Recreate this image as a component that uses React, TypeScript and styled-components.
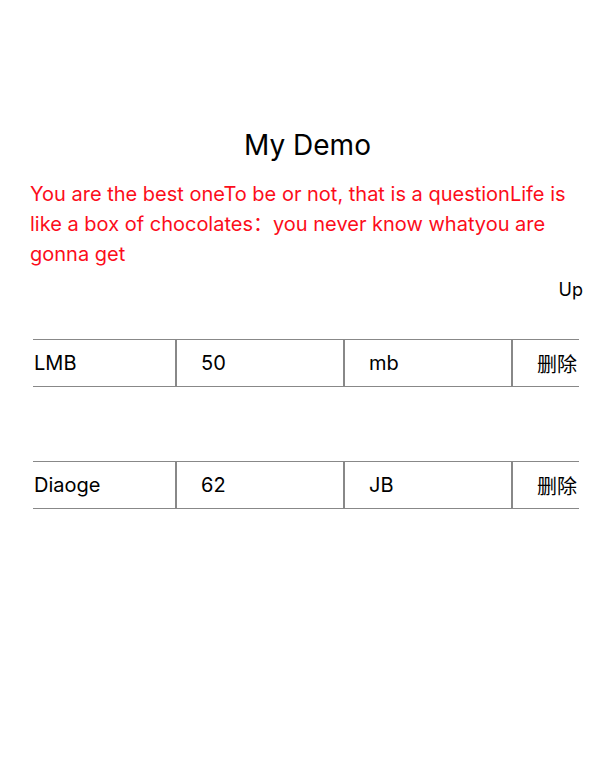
import React from "react";
import styled, { createGlobalStyle } from "styled-components";

const Global = createGlobalStyle`
  html, body { margin: 0; padding: 0; background: #fff; }
  body { font-family: Inter, "Liberation Sans", "Noto Sans CJK SC", sans-serif; color: #000; }
`;

const Page = styled.div`
  display: flex;
  flex-direction: column;
  padding: 128px 25px 0 30px;
`;

const Title = styled.h1`
  margin: 0;
  font-size: 28px;
  font-weight: 400;
  line-height: 34px;
  text-align: center;
  padding-left: 2px;
`;

const Quote = styled.p`
  margin: 17px 0 0;
  font-size: 20px;
  line-height: 30px;
  color: #fc0d1b;
`;

const UpButton = styled.div`
  margin-top: 9px;
  align-self: flex-end;
  font-size: 18px;
  line-height: 24px;
`;

const Rows = styled.div`
  display: flex;
  flex-direction: column;
  gap: 74px;
  margin: 37px 4px 0 3px;
`;

const Row = styled.div`
  display: flex;
  height: 46px;
  border-top: 1px solid #888;
  border-bottom: 1px solid #888;
`;

const Cell = styled.div<{ $w?: number; $pad: number; $last?: boolean }>`
  display: flex;
  align-items: center;
  box-sizing: border-box;
  ${(p) => (p.$w ? `width: ${p.$w}px; flex: none;` : `flex: 1;`)}
  padding-left: ${(p) => p.$pad}px;
  font-size: 20px;
  border-right: ${(p) => (p.$last ? "none" : "2px solid #888")};
  white-space: nowrap;
  overflow: hidden;
`;

const data = [
  { name: "LMB", num: "50", unit: "mb" },
  { name: "Diaoge", num: "62", unit: "JB" },
];

export default function App() {
  return (
    <>
      <Global />
      <Page>
        <Title>My Demo</Title>
        <Quote>
          You are the best oneTo be or not, that is a questionLife is like a box of chocolates：you never know whatyou are gonna get
        </Quote>
        <UpButton>Up</UpButton>
        <Rows>
          {data.map((d) => (
            <Row key={d.name}>
              <Cell $w={144} $pad={1}>{d.name}</Cell>
              <Cell $w={168} $pad={24}>{d.num}</Cell>
              <Cell $w={168} $pad={24}>{d.unit}</Cell>
              <Cell $pad={24} $last>删除</Cell>
            </Row>
          ))}
        </Rows>
      </Page>
    </>
  );
}
